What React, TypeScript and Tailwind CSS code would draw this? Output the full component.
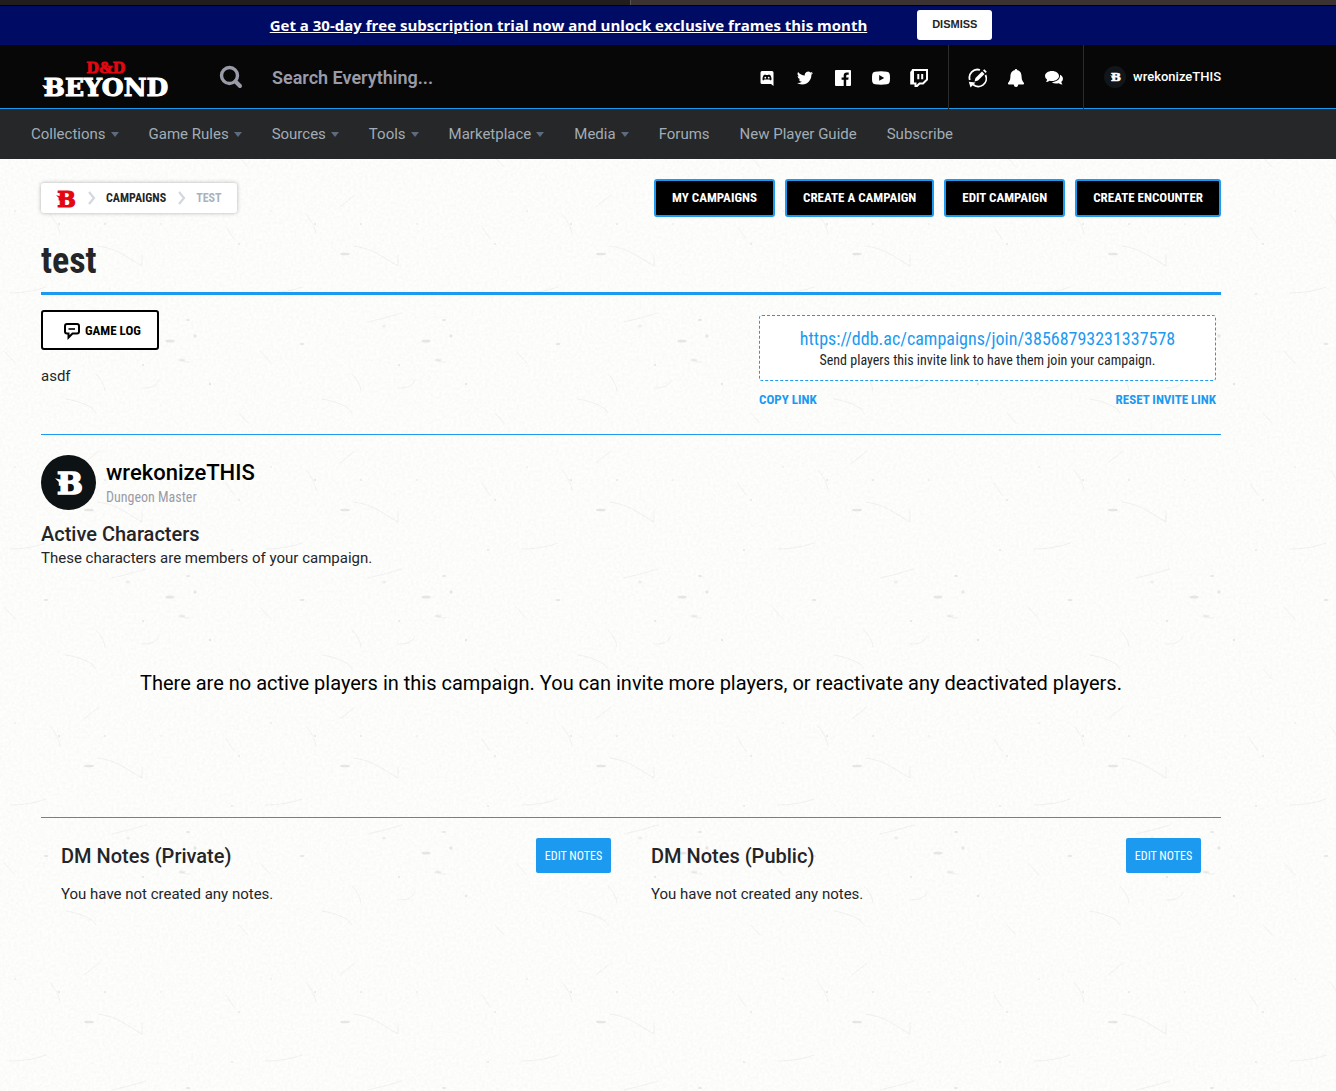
import type { ReactNode } from "react";

const condensed = "font-['Roboto_Condensed',Roboto,sans-serif]";

const navItems = [
  { label: "Collections", menu: true },
  { label: "Game Rules", menu: true },
  { label: "Sources", menu: true },
  { label: "Tools", menu: true },
  { label: "Marketplace", menu: true },
  { label: "Media", menu: true },
  { label: "Forums", menu: false },
  { label: "New Player Guide", menu: false },
  { label: "Subscribe", menu: false },
];

const campaignActions = ["My Campaigns", "Create a Campaign", "Edit Campaign", "Create Encounter"];

/* Tiled paper grain: soft noise with a few specks and fibres. */
function PaperTexture() {
  return (
    <svg className="pointer-events-none absolute inset-0 h-full w-full" aria-hidden="true">
      <defs>
        <filter id="grain" x="0" y="0" width="100%" height="100%">
          <feTurbulence type="fractalNoise" baseFrequency="0.35" numOctaves="3" seed="4" stitchTiles="stitch" />
          <feColorMatrix values="0 0 0 0 0.5  0 0 0 0 0.5  0 0 0 0 0.47  0.16 0 0 0 -0.05" />
        </filter>
        <pattern id="paper" width="256" height="256" patternUnits="userSpaceOnUse" y="182">
          <g fill="#8c8c86" fillOpacity="0.2">
            <ellipse cx="170" cy="0" rx="4.500" ry="1.600" />
            <ellipse cx="170" cy="256" rx="4.500" ry="1.600" />
            <ellipse cx="195" cy="251" rx="1.600" ry="1.800" />
            <ellipse cx="188" cy="235" rx="2" ry="0.900" />
            <ellipse cx="128" cy="241" rx="2" ry="1.500" opacity="0.600" />
            <ellipse cx="182" cy="19" rx="3.500" ry="1.600" opacity="0.600" />
            <ellipse cx="210" cy="43" rx="1.200" ry="1.200" />
            <ellipse cx="89" cy="169" rx="5" ry="1.300" />
            <ellipse cx="46" cy="3" rx="2.400" ry="1" />
            <circle cx="59" cy="139" r="1" />
            <circle cx="105" cy="139" r="0.900" />
            <circle cx="161" cy="139" r="0.800" />
            <circle cx="239" cy="159" r="0.900" />
            <circle cx="15" cy="126" r="0.800" />
            <circle cx="143" cy="24" r="1.100" />
            <circle cx="232" cy="209" r="0.900" />
          </g>
          <g fill="none" stroke="#8c8c86" strokeOpacity="0.120" strokeWidth="0.900" strokeLinecap="round">
            <path d="M112 237 Q130 233 146 228" />
            <path d="M66 58 Q80 60 92 67 L96 72" />
            <path d="M142 47 Q156 48 159 39" />
            <path d="M84 122 L99 110" />
            <path d="M50 129 Q59 140 60 149" />
            <path d="M226 142 L234 154" />
            <path d="M98 161 Q112 163 122 169 L142 181 L142 170" />
            <path d="M10 208 Q30 208 46 202" />
            <path d="M181 19 Q186 22 190 21" />
            <path d="M239 72 L248 82" />
            <path d="M4 10 L15 22" />
            <path d="M96 33 Q104 41 105 50" />
          </g>
        </pattern>
      </defs>
      <rect width="100%" height="100%" filter="url(#grain)" />
      <rect width="100%" height="100%" fill="url(#paper)" />
    </svg>
  );
}

function BrandMark({ className }: { className: string }) {
  return (
    <svg viewBox="0 0 30 28" className={`overflow-visible ${className}`} aria-hidden="true" fill="currentColor">
      <text x="16" y="26" textAnchor="middle" fontSize="33" fontWeight="700" fontFamily="'DejaVu Serif', serif" stroke="currentColor" strokeWidth="1.800">
        B
      </text>
      <path d="M0 9 L9 11 V17 H4 V13 Z" />
    </svg>
  );
}

function Logo() {
  return (
    <svg width="130" height="44" viewBox="0 0 130 44" role="img" aria-label="D&D Beyond" className="overflow-visible">
      <text x="65" y="16" textAnchor="middle" fontSize="17" fontWeight="700" fill="#e40712" stroke="#e40712" strokeWidth="0.900" fontFamily="'Liberation Serif', serif">
        D&amp;D
      </text>
      <text x="65" y="39" textAnchor="middle" fontSize="25" fontWeight="700" fill="#fff" stroke="#fff" strokeWidth="1.100" fontFamily="'DejaVu Serif', serif">
        BEYOND
      </text>
      <path d="M1 28 L7 29 V32 H4 Z" fill="#fff" />
    </svg>
  );
}

function IconLink({ label, children }: { label: string; children: ReactNode }) {
  return (
    <a href="#" aria-label={label} className="flex w-[38px] items-center justify-center pt-0.5 text-white">
      {children}
    </a>
  );
}

function Header() {
  return (
    <header className="border-b border-[#1b9af0] bg-[#070707] pr-[74px]">
      <div className="mx-auto flex h-[63px] max-w-[1180px] items-center">
        <a href="#" className="mt-1 shrink-0">
          <Logo />
        </a>
        <label htmlFor="search" className="ml-12 shrink-0 text-[#9a9ba8]">
          <svg width="24" height="24" viewBox="0 0 24 24" fill="none" stroke="currentColor" aria-label="Search">
            <circle cx="10.5" cy="10.5" r="8" strokeWidth="3.400" />
            <path d="M16.5 16.5 L21 21" strokeWidth="4" strokeLinecap="round" />
          </svg>
        </label>
        <input
          id="search"
          type="search"
          placeholder="Search Everything..."
          className="mt-0.5 ml-[29px] h-10 w-0 min-w-0 flex-1 bg-transparent text-lg font-semibold text-white outline-none placeholder:text-[#9a9ba8]"
        />
        <nav aria-label="Social" className="flex pr-2.5">
          <IconLink label="Discord">
            <svg width="14" height="16" viewBox="0 0 14 16">
              <path fill="currentColor" fillRule="evenodd" d="M2 1 H12 Q13.5 1 13.5 2.500 V16 L11 14 H2 Q0.500 14 0.500 12.500 V2.500 Q0.500 1 2 1 Z M3.300 10.500 L4.500 9.600 H9.500 L10.700 10.500 Q11.700 10 11.500 8.500 Q11.300 6.500 10.400 5.200 Q9.600 4.700 8.600 4.600 L8.300 5 H5.700 L5.400 4.600 Q4.400 4.700 3.600 5.200 Q2.700 6.500 2.500 8.500 Q2.300 10 3.300 10.500 Z" />
              <circle cx="5.300" cy="7.700" r="0.900" fill="currentColor" />
              <circle cx="8.700" cy="7.700" r="0.900" fill="currentColor" />
            </svg>
          </IconLink>
          <IconLink label="Twitter">
            <svg width="16" height="16" viewBox="0 0 24 24" fill="currentColor">
              <path d="M23.950 4.570a10 10 0 0 1-2.820.77 4.960 4.960 0 0 0 2.160-2.720 9.900 9.900 0 0 1-3.120 1.190 4.920 4.920 0 0 0-8.380 4.480A13.930 13.930 0 0 1 1.640 3.160a4.920 4.920 0 0 0 1.520 6.570 4.900 4.900 0 0 1-2.230-.61v.06a4.920 4.920 0 0 0 3.950 4.830 5 5 0 0 1-2.210.08 4.940 4.940 0 0 0 4.600 3.420A9.870 9.870 0 0 1 0 19.540a13.990 13.990 0 0 0 7.550 2.210c9.050 0 14-7.500 14-13.980 0-.21 0-.42-.02-.63a9.940 9.940 0 0 0 2.420-2.570z" />
            </svg>
          </IconLink>
          <IconLink label="Facebook">
            <svg width="16" height="16" viewBox="0 0 16 16" fill="currentColor">
              <path d="M1 0 H15 Q16 0 16 1 V15 Q16 16 15 16 H11.200 V9.800 H13.300 L13.600 7.400 H11.200 V5.900 Q11.200 4.700 12.400 4.700 H13.700 V2.500 L11.800 2.400 Q8.700 2.400 8.700 5.600 V7.400 H6.600 V9.800 H8.700 V16 H1 Q0 16 0 15 V1 Q0 0 1 0 Z" />
            </svg>
          </IconLink>
          <IconLink label="YouTube">
            <svg width="18" height="14" viewBox="0 0 18 14" fill="currentColor">
              <path fillRule="evenodd" d="M3 0.700 Q9 0 15 0.700 Q17.500 0.900 17.800 3.500 Q18.200 7 17.800 10.500 Q17.500 13 15 13.300 Q9 14 3 13.300 Q0.500 13 0.200 10.500 Q-0.200 7 0.200 3.500 Q0.500 0.900 3 0.700 Z M7.200 4 V9.800 L12.200 6.900 Z" />
            </svg>
          </IconLink>
          <IconLink label="Twitch">
            <svg width="18" height="18" viewBox="0 0 18 18" fill="none" stroke="currentColor" strokeWidth="2">
              <path d="M1.600 3.400 L2.800 1 H17 V10.500 L13 14.500 H9.500 L7 17 H5.500 V14.500 H1.200 V3.400 Z" />
              <path d="M1 2 H4 V14 H1 Z" fill="currentColor" stroke="none" />
              <path d="M8.300 5 V10.200 M12.200 5 V10.200" />
            </svg>
          </IconLink>
        </nav>
        <div className="-mb-px flex h-16 border-x border-[#2b2c2e] px-2.5">
          <IconLink label="Homebrew">
            <svg width="20" height="20" viewBox="0 0 20 20" fill="none" stroke="currentColor" strokeWidth="1.800">
              <path d="M1.800 12 A8 8 0 0 1 12 2" />
              <path d="M17.500 7 A8 8 0 0 1 5 16.500" />
              <path d="M0.800 13.800 L7.500 14.500 L2.500 19.500 Z" fill="currentColor" stroke="none" />
              <path d="M6.500 13.500 L7.500 10 L14 3.500 L16.500 6 L10 12.500 Z" fill="currentColor" stroke="none" />
              <path d="M15 2.500 L16.300 1.200 L18.800 3.700 L17.500 5 Z" fill="currentColor" stroke="none" />
            </svg>
          </IconLink>
          <IconLink label="Notifications">
            <svg width="18" height="18" viewBox="0 0 18 18" fill="currentColor">
              <path d="M9 0 Q10.200 0 10.300 1.300 C14 2 14.500 5 14.600 8 C14.700 11.500 16 12.800 17 14 Q17.300 15.500 16 15.500 H11.300 Q11 18 9 18 Q7 18 6.700 15.500 H2 Q0.700 15.500 1 14 C2 12.800 3.300 11.500 3.400 8 C3.500 5 4 2 7.700 1.300 Q7.800 0 9 0 Z" />
            </svg>
          </IconLink>
          <IconLink label="Messages">
            <svg width="18" height="16" viewBox="0 0 18 16" fill="currentColor">
              <path d="M7 1 C11 1 14 3.200 14 6 C14 8.800 11 11 7 11 Q5.700 11 4.500 10.700 Q3 12 1 12 Q2 10.800 2 9.500 Q0 8 0 6 C0 3.200 3 1 7 1 Z" />
              <path d="M15 4.800 C18.500 6.500 18.800 9.800 16.300 11.800 Q16.300 13 17.500 14.500 Q15.500 14.500 13.800 13.200 Q9.500 14.200 6.800 12.200 C11.500 12 15.500 9.500 15 4.800 Z" />
            </svg>
          </IconLink>
        </div>
        <a href="#" className="ml-5 flex items-center gap-[7px] text-[13px] font-medium text-white">
          <span className="flex size-[22px] items-center justify-center rounded-full bg-[#11161a]">
            <BrandMark className="h-[10px] w-[11px]" />
          </span>
          wrekonizeTHIS
        </a>
      </div>
    </header>
  );
}

function MainNav() {
  return (
    <nav aria-label="Main" className="bg-[#252728] pr-[74px]">
      <ul className="mx-auto flex h-[50px] max-w-[1200px] items-center gap-[30px] text-[15px] text-[#a2acb6]">
        {navItems.map((item) => (
          <li key={item.label}>
            <a href="#" className="flex items-center gap-[5px]">
              {item.label}
              {item.menu && (
                <svg width="8" height="5" viewBox="0 0 8 5" fill="#5d6b7c" aria-hidden="true">
                  <path d="M0 0 H8 L4 5 Z" />
                </svg>
              )}
            </a>
          </li>
        ))}
      </ul>
    </nav>
  );
}

function Chevron() {
  return (
    <svg width="8" height="14" viewBox="0 0 8 14" fill="none" stroke="#d3d7de" strokeWidth="2.200" aria-hidden="true">
      <path d="M1 1 L6 7 L1 13" />
    </svg>
  );
}

function Notes({ title }: { title: string }) {
  return (
    <section className="flex-1 px-5">
      <div className="flex items-center justify-between">
        <h2 className="text-xl font-medium">{title}</h2>
        <button type="button" className={`${condensed} h-[35px] w-[75px] rounded-xs bg-[#1b9af0] text-xs text-white`}>
          EDIT NOTES
        </button>
      </div>
      <p className="mt-2.5 text-[15px] leading-[22px]">You have not created any notes.</p>
    </section>
  );
}

export default function App() {
  return (
    <div className="flex min-h-screen flex-col font-[Roboto,sans-serif] text-[#242528]">
      <div className="flex h-[6px] border-b border-black">
        <div className="w-[630px] bg-[#211d1c]" />
        <div className="flex-1 border-l border-[#555] bg-[#3c3231]" />
      </div>
      <aside className="flex h-[39px] items-center justify-center gap-[50px] bg-[#000b64] pr-[74px]">
        <a href="#" className="font-['Open_Sans',sans-serif] text-[15px] font-bold text-white underline">
          Get a 30-day free subscription trial now and unlock exclusive frames this month
        </a>
        <button type="button" className="mb-0.5 h-[30px] w-[75px] rounded-[3px] bg-white font-['Liberation_Sans',sans-serif] text-[11px] font-bold">
          DISMISS
        </button>
      </aside>
      <Header />
      <MainNav />
      <main className="relative flex-1 bg-[#fefefd] pr-[74px]">
        <PaperTexture />
        <div className="relative mx-auto max-w-[1180px] pt-5">
          <div className="flex h-[38px] items-center justify-between">
            <nav aria-label="Breadcrumb">
              <ol className={`${condensed} flex h-[30px] items-center rounded-[3px] bg-white px-[15px] text-xs font-bold shadow-[0_0_4px_rgba(0,0,0,0.3)]`}>
                <li>
                  <a href="#" aria-label="Home" className="block text-[#e40712]">
                    <BrandMark className="h-[19px] w-5" />
                  </a>
                </li>
                <li className="ml-3 flex items-center gap-2.5">
                  <Chevron />
                  <a href="#">CAMPAIGNS</a>
                </li>
                <li className="ml-3 flex items-center gap-2.5 text-[#a9b3be]">
                  <Chevron />
                  TEST
                </li>
              </ol>
            </nav>
            <div className="flex gap-2.5">
              {campaignActions.map((label) => (
                <a key={label} href="#" className={`${condensed} flex h-[38px] items-center rounded-[3px] border-2 border-[#1b9af0] bg-black px-4 text-[13px] font-bold text-white uppercase`}>
                  {label}
                </a>
              ))}
            </div>
          </div>

          <h1 className={`${condensed} mt-[23px] border-b-3 border-[#1b9af0] pb-[10px] text-4xl leading-[42px] font-bold`}>test</h1>

          <div className="flex h-[140px] justify-between border-b border-[#1b9af0] pt-[15px]">
            <div>
              <button type="button" className={`${condensed} flex h-10 w-[118px] items-center gap-1 rounded-[3px] border-2 border-black bg-white pt-px pl-5 text-[13px] font-bold text-black`}>
                <svg width="18" height="18" viewBox="0 0 18 18" fill="none" stroke="currentColor" strokeWidth="2" aria-hidden="true">
                  <path d="M4 2 H14 Q16 2 16 4 V9.500 Q16 11.500 14 11.500 H9.500 L5.500 15.500 V11.500 H4 Q2 11.500 2 9.500 V4 Q2 2 4 2 Z" />
                  <path d="M5.500 7 H12" strokeWidth="1.600" />
                </svg>
                GAME LOG
              </button>
              <p className="mt-[15px] text-[15px] leading-[22px]">asdf</p>
            </div>
            <div className={`${condensed} mt-[5px] mr-[5px] w-[457px]`}>
              <div className="flex h-[66px] flex-col items-center justify-center rounded-[3px] border border-dashed border-[#1b9af0] bg-white pt-0.5 text-center">
                <a href="#" className="text-lg leading-[22px] text-[#1b9af0]">
                  https://ddb.ac/campaigns/join/38568793231337578
                </a>
                <p className="text-sm leading-5">Send players this invite link to have them join your campaign.</p>
              </div>
              <div className="mt-[9px] flex justify-between text-[13px] font-bold text-[#1b9af0]">
                <button type="button">COPY LINK</button>
                <button type="button">RESET INVITE LINK</button>
              </div>
            </div>
          </div>

          <div className="mt-5 flex items-center gap-2.5">
            <span className="flex size-[55px] items-center justify-center rounded-full bg-[#0d1214] text-white">
              <BrandMark className="h-[26px] w-7" />
            </span>
            <div>
              <p className="text-[22px] leading-7 font-medium text-black">wrekonizeTHIS</p>
              <p className={`${condensed} text-sm leading-5 text-[#9a9ba8]`}>Dungeon Master</p>
            </div>
          </div>
          <h2 className="mt-2.5 text-xl font-medium">Active Characters</h2>
          <p className="text-[15px] leading-5">These characters are members of your campaign.</p>
          <p className="flex h-[249px] items-center justify-center pb-5 text-xl text-black">
            There are no active players in this campaign. You can invite more players, or reactivate any deactivated players.
          </p>

          <div className="flex border-t border-[#1b9af0] pt-5">
            <Notes title="DM Notes (Private)" />
            <Notes title="DM Notes (Public)" />
          </div>
        </div>
      </main>
    </div>
  );
}
